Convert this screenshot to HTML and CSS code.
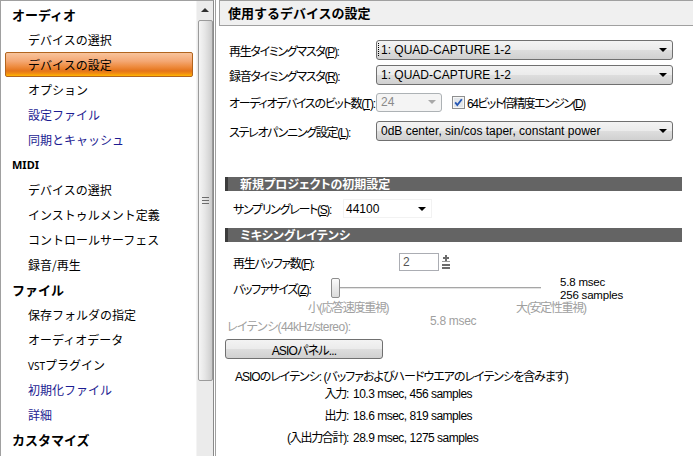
FILE: index.html
```html
<!DOCTYPE html>
<html lang="ja">
<head>
<meta charset="utf-8">
<title>環境設定</title>
<link rel="stylesheet" href="styles.css">
</head>
<body>
<div class="app">
  <aside class="sidebar">
    <ul class="nav">
      <li class="nav-head">オーディオ</li>
      <li class="nav-item">デバイスの選択</li>
      <li class="nav-item selected">デバイスの設定</li>
      <li class="nav-item">オプション</li>
      <li class="nav-item link">設定ファイル</li>
      <li class="nav-item link">同期とキャッシュ</li>
      <li class="nav-head small">MIDI</li>
      <li class="nav-item">デバイスの選択</li>
      <li class="nav-item">インストゥルメント定義</li>
      <li class="nav-item">コントロールサーフェス</li>
      <li class="nav-item">録音/再生</li>
      <li class="nav-head">ファイル</li>
      <li class="nav-item">保存フォルダの指定</li>
      <li class="nav-item">オーディオデータ</li>
      <li class="nav-item"><span class="vst">VST</span>プラグイン</li>
      <li class="nav-item link">初期化ファイル</li>
      <li class="nav-item link">詳細</li>
      <li class="nav-head">カスタマイズ</li>
    </ul>
    <div class="vscroll">
      <div class="sb-btn"><span class="tri-up"></span></div>
      <div class="sb-thumb"><span class="grip"></span></div>
      <div class="sb-track"></div>
    </div>
  </aside>

  <main class="panel">
    <div class="title">使用するデバイスの設定</div>

    <div class="dev">
      <div class="row r1">
        <span class="lbl">再生タイミングマスタ(<u>P</u>):</span>
        <div class="combo wide"><span class="combo-val"><span class="focus-rect">1: QUAD-CAPTURE 1-2</span></span><span class="combo-arrow"></span></div>
      </div>
      <div class="row r2">
        <span class="lbl">録音タイミングマスタ(<u>R</u>):</span>
        <div class="combo wide"><span class="combo-val">1: QUAD-CAPTURE 1-2</span><span class="combo-arrow"></span></div>
      </div>
      <div class="row r3">
        <span class="lbl">オーディオデバイスのビット数(<u>T</u>):</span>
        <div class="combo small disabled"><span class="combo-val">24</span><span class="combo-arrow"></span></div>
        <svg class="check" width="13" height="13" viewBox="0 0 13 13">
          <rect x="0.5" y="0.5" width="12" height="12" fill="#f6f6f6" stroke="#8e8f8f"/>
          <rect x="2" y="2" width="9" height="9" fill="#e2e6ea"/>
          <path d="M3.2 6.4 L5.3 9 L9.8 3.2" fill="none" stroke="#2456b4" stroke-width="1.8"/>
        </svg>
        <span class="check-lbl">64ビット倍精度エンジン(<u>D</u>)</span>
      </div>
      <div class="row r4">
        <span class="lbl">ステレオパンニング設定(<u>L</u>):</span>
        <div class="combo wide"><span class="combo-val">0dB center, sin/cos taper, constant power</span><span class="combo-arrow"></span></div>
      </div>
    </div>

    <div class="section-bar first">新規プロジェクトの初期設定</div>
    <div class="row sample">
      <span class="lbl-s">サンプリングレート(<u>S</u>):</span>
      <div class="combo flat"><span class="combo-val">44100</span><span class="combo-arrow"></span></div>
    </div>

    <div class="section-bar second">ミキシングレイテンシ</div>
    <div class="row buffers">
      <span class="lbl-b">再生バッファ数(<u>F</u>):</span>
      <div class="spin">2</div>
      <svg class="spin-btn" width="8" height="17" viewBox="0 0 8 17">
        <rect x="3" y="1" width="2" height="6" fill="#6b6b6b"/>
        <rect x="1" y="3" width="6" height="2" fill="#6b6b6b"/>
        <rect x="0" y="7" width="8" height="1" fill="#9a9a9a"/>
        <rect x="0" y="10" width="8" height="2" fill="#6b6b6b"/>
        <rect x="0" y="13" width="8" height="2" fill="#6b6b6b"/>
      </svg>
    </div>
    <div class="row bufsize">
      <span class="lbl-z">バッファサイズ(<u>Z</u>):</span>
      <div class="slider"><span class="thumb"></span><span class="track"></span></div>
      <div class="bufvals"><div>5.8 msec</div><div>256 samples</div></div>
    </div>
    <div class="row ticks">
      <span class="muted tick-min">小(応答速度重視)</span>
      <span class="muted">大(安定性重視)</span>
    </div>
    <div class="row latency">
      <span class="muted lat-lbl">レイテンシ(44kHz/stereo):</span>
      <span class="muted lat-val">5.8 msec</span>
    </div>
    <div class="btn-row"><button class="btn" type="button">ASIOパネル...</button></div>

    <div class="asio-head">ASIOのレイテンシ: (バッファおよびハードウエアのレイテンシを含みます)</div>
    <div class="asio-grid">
      <span class="k">入力:</span><span class="v">10.3 msec, 456 samples</span>
      <span class="k">出力:</span><span class="v">18.6 msec, 819 samples</span>
      <span class="k">(入出力合計):</span><span class="v">28.9 msec, 1275 samples</span>
    </div>
  </main>
</div>
</body>
</html>
```

FILE: styles.css
```css
* { box-sizing: border-box; }
html, body { margin: 0; padding: 0; }
body {
  width: 693px;
  height: 456px;
  overflow: hidden;
  background: #fff;
  color: #000;
  font-family: "Noto Sans CJK JP", "Liberation Sans", sans-serif;
}
u { text-decoration: underline; text-underline-offset: 1px; }

.app { display: flex; height: 456px; }

/* ---------- sidebar ---------- */
.sidebar {
  width: 214px;
  flex: none;
  display: flex;
  border-top: 1px solid #a0a0a0;
  border-left: 1px solid #a0a0a0;
  border-right: 1px solid #8a8a8a;
}
.nav {
  flex: 1;
  list-style: none;
  margin: 0;
  padding: 1px 0 0;
  overflow: hidden;
}
.nav li {
  height: 25px;
  line-height: 25px;
  font-size: 12px;
  white-space: nowrap;
}
.nav-head { font-weight: bold; font-size: 13px !important; padding-left: 11px; }
.nav-head.small { font-size: 11px !important; font-family: "Noto Sans", "Liberation Sans", sans-serif; }
.nav-item { padding-left: 27px; }
.nav-item.link { color: #1c1c92; }
.vst { font-size: 10px; font-family: "Noto Sans", sans-serif; }
.nav-item.selected {
  margin: 0 3px 0 4px;
  padding-left: 22px;
  line-height: 23px;
  border: 1px solid #b2651f;
  border-radius: 2px;
  background: linear-gradient(to bottom, #f8c49c 0%, #f4a874 35%, #ee8b3e 60%, #e4741a 78%, #f39012 90%, #ffb600 100%);
}

.vscroll {
  width: 17px;
  flex: none;
  display: flex;
  flex-direction: column;
  background: #ebebeb;
  border-left: 1px solid #f4f4f4;
}
.sb-btn {
  height: 18px;
  display: flex;
  align-items: center;
  justify-content: center;
}
.tri-up {
  width: 0; height: 0;
  border-left: 4px solid transparent;
  border-right: 4px solid transparent;
  border-bottom: 4px solid #303030;
}
.sb-thumb {
  height: 361px;
  margin: 1px 0 0 1px;
  width: 15px;
  border: 1px solid #9b9b9b;
  border-radius: 2px;
  background: linear-gradient(to right, #f5f5f5, #e6e6e6 45%, #d6d6d6 80%, #cacaca);
  display: flex;
  align-items: center;
  justify-content: center;
}
.grip {
  width: 7px; height: 7px;
  background: repeating-linear-gradient(to bottom, #6c6c6c 0 1px, transparent 1px 3px);
}
.sb-track { flex: 1; }

/* ---------- panel ---------- */
.panel {
  flex: 1;
  min-width: 0;
  margin-left: 1px;
  border-left: 1px solid #a0a0a0;
  display: flex;
  flex-direction: column;
  font-family: "Liberation Sans", "Noto Sans CJK JP", sans-serif;
  font-size: 12px;
  font-feature-settings: "palt";
  letter-spacing: -1.3px;
  white-space: nowrap;
}
.title {
  margin-left: 3px;
  height: 26px;
  border: 1px solid #a0a0a0;
  border-right: 0;
  background: #f0f0f0;
  font-family: "Noto Sans CJK JP", sans-serif;
  font-feature-settings: normal;
  letter-spacing: 0;
  font-weight: bold;
  font-size: 13px;
  line-height: 23px;
  padding-left: 8px;
}

.row { display: flex; align-items: center; }

.dev { display: flex; flex-direction: column; padding-left: 13px; }
.dev .row { height: 20px; }
.r1 { margin-top: 14px; }
.r2 { margin-top: 5px; }
.r3 { margin-top: 7px; }
.r4 { margin-top: 9px; }
.lbl { width: 147px; flex: none; }

.combo {
  height: 20px;
  display: flex;
  align-items: center;
  border: 1px solid #707070;
  border-radius: 3px;
  background: linear-gradient(to bottom, #f3f3f3 0%, #ebebeb 48%, #dddddd 52%, #d0d0d0 100%);
  flex: none;
  letter-spacing: 0;
}
.combo.wide { width: 297px; }
.combo.small { width: 66px; height: 19px; }
.combo-val { flex: 1; padding-left: 4px; overflow: hidden; }
.focus-rect {
  display: block;
  margin: 0 0 0 -2px;
  padding-left: 2px;
  outline: 1px dotted #000;
  line-height: 14px;
}
.combo-arrow {
  width: 18px;
  align-self: stretch;
  display: flex;
  align-items: center;
  justify-content: center;
}
.combo-arrow::after {
  content: "";
  width: 0; height: 0;
  border-left: 4px solid transparent;
  border-right: 4px solid transparent;
  border-top: 4px solid #000;
}
.combo.disabled {
  background: #f4f4f4;
  border-color: #adb2b5;
  color: #8a8a8a;
}
.combo.disabled .combo-arrow::after { border-top-color: #a8a8a8; }
.check { margin-left: 10px; flex: none; }
.check-lbl { margin-left: 2px; letter-spacing: -1.5px; }

.section-bar {
  height: 14px;
  margin: 0 11px 0 9px;
  background: #646464;
  border-left: 3px solid #3c3c3c;
  color: #fff;
  font-family: "Noto Sans CJK JP", sans-serif;
  font-weight: bold;
  font-size: 12px;
  letter-spacing: 0;
  line-height: 14px;
  padding-left: 12px;
}
.section-bar.first { margin-top: 36px; }
.section-bar.second { margin-top: 10px; }

.sample { margin-top: 8px; height: 19px; padding-left: 17px; }
.lbl-s { width: 110px; flex: none; }
.combo.flat {
  width: 89px;
  height: 19px;
  background: #fff;
  border: 1px solid #f2f2f2;
  border-radius: 0;
}
.combo.flat .combo-val { padding-left: 2px; }

.buffers { margin-top: 11px; height: 18px; padding-left: 17px; }
.lbl-b { width: 166px; flex: none; }
.spin {
  width: 40px;
  height: 18px;
  border: 1px solid #abadb3;
  color: #555;
  line-height: 16px;
  padding-left: 3px;
}
.spin-btn { margin-left: 3px; }

.bufsize { margin-top: 7px; height: 20px; padding-left: 17px; }
.lbl-z { width: 98px; flex: none; }
.slider { width: 210px; display: flex; align-items: center; height: 20px; }
.thumb {
  width: 9px;
  height: 20px;
  flex: none;
  border: 1px solid #8d8d8d;
  border-radius: 2px;
  background: linear-gradient(to bottom, #fbfbfb, #e9e9e9 50%, #dcdcdc);
}
.track {
  flex: 1;
  height: 2px;
  border-top: 1px solid #a6a6a6;
  border-bottom: 1px solid #e3e3e3;
}
.bufvals {
  margin-left: 19px;
  margin-top: -2px;
  align-self: flex-start;
  font-size: 11.5px;
  line-height: 13px;
  letter-spacing: -0.2px;
}

.muted { color: #a0a0a0; }
.ticks { margin-top: 1px; height: 14px; padding-left: 92px; }
.tick-min { width: 208px; flex: none; }

.latency { margin-top: 1px; height: 20px; padding-left: 11px; align-items: stretch; }
.lat-lbl { width: 203px; flex: none; align-self: flex-end; line-height: 14px; letter-spacing: -0.6px; }
.lat-val { align-self: flex-start; line-height: 14px; letter-spacing: -0.3px; }

.btn-row { margin-top: 5px; padding-left: 9px; display: flex; }
.btn {
  width: 158px;
  height: 20px;
  padding: 0;
  font: inherit;
  letter-spacing: -0.8px;
  color: #000;
  border: 1px solid #707070;
  border-radius: 3px;
  background: linear-gradient(to bottom, #f3f3f3 0%, #ebebeb 48%, #dddddd 52%, #d0d0d0 100%);
}

.asio-head { margin-top: 11px; height: 14px; line-height: 14px; padding-left: 19px; letter-spacing: -1px; }
.asio-grid {
  margin-top: 3px;
  display: grid;
  grid-template-columns: 113px auto;
  grid-auto-rows: 14px;
  column-gap: 5px;
  row-gap: 8px;
  line-height: 14px;
  padding-left: 19px;
  justify-content: start;
}
.asio-grid .k { text-align: right; }
.asio-grid .v { letter-spacing: -0.5px; }
```
